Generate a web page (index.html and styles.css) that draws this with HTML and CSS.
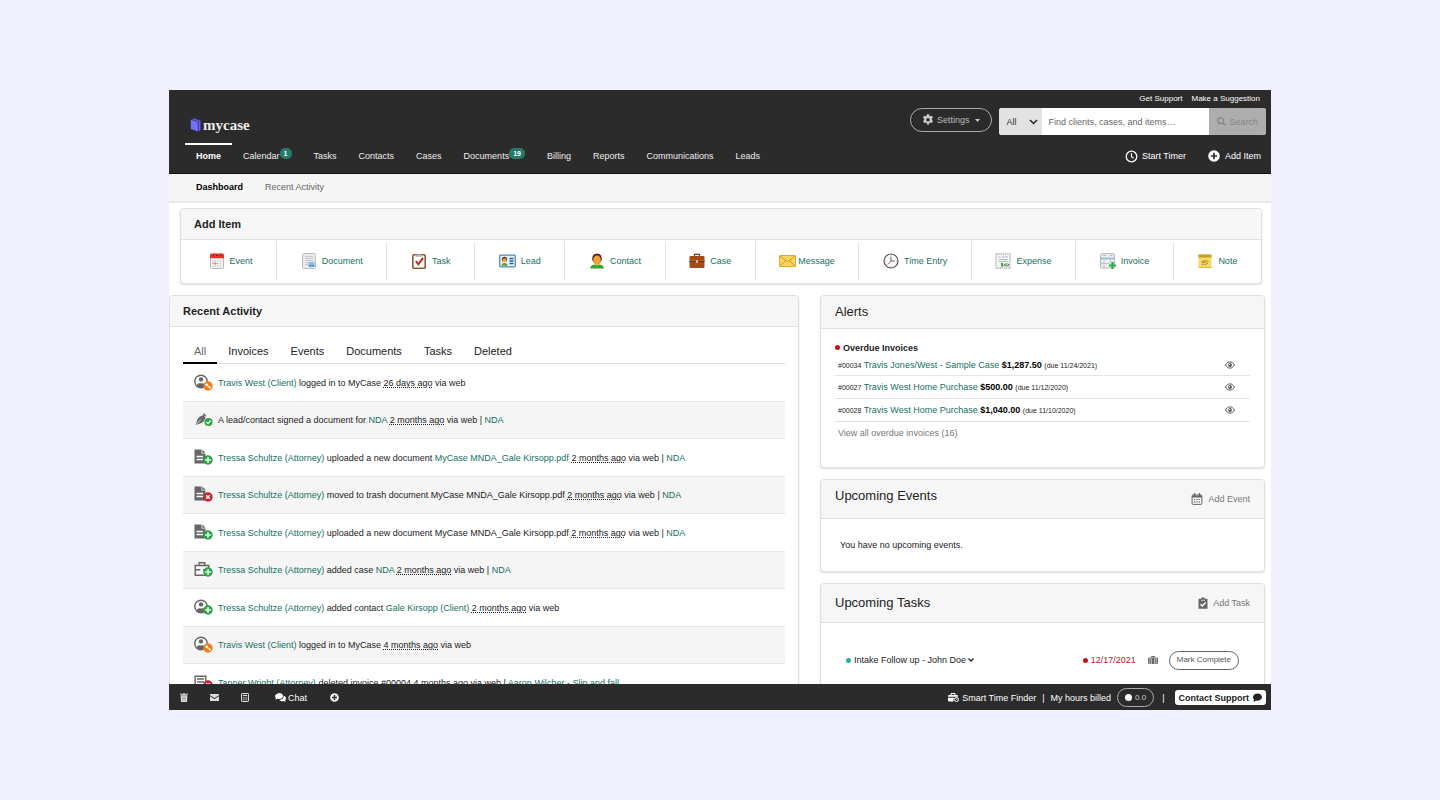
FILE: index.html
```html
<!DOCTYPE html>
<html lang="en">
<head>
<meta charset="utf-8">
<title>MyCase – Dashboard</title>
<link rel="stylesheet" href="styles.css">
</head>
<body>
<svg class="sprite" aria-hidden="true">
  <symbol id="person" viewBox="0 0 20 18">
    <circle cx="7" cy="7.5" r="6.2" fill="#fff" stroke="#666" stroke-width="1.4"/>
    <circle cx="7" cy="5.4" r="2.2" fill="#666"/>
    <path d="M2.6 11.8C3.4 9.2 5 8.8 7 9.6c2-.8 3.600-.4 4.400 2.200A6 6 0 0 1 2.600 11.800z" fill="#666"/>
  </symbol>
  <symbol id="file" viewBox="0 0 20 18">
    <path d="M.5.500h7v4h4V14.500H.500z" fill="#666"/><path d="M8.300.500l3.200 3.200H8.300z" fill="#666"/>
    <path d="M2.500 7.500h6.500M2.500 10.500h6.500" stroke="#fff" stroke-width="1.300"/>
  </symbol>
  <symbol id="add" viewBox="0 0 10 10">
    <circle cx="5" cy="5" r="4.700" fill="#28a745"/><path d="M5 2.200v5.600M2.200 5h5.600" stroke="#fff" stroke-width="1.600"/>
  </symbol>
  <symbol id="key" viewBox="0 0 10 10">
    <circle cx="5" cy="5" r="4.700" fill="#f57f17"/><circle cx="3.700" cy="3.700" r="1.300" fill="#fff"/><path d="M4 4l3.600 3.600M6.600 6.600l.9-.9" stroke="#fff" stroke-width="1.200"/>
  </symbol>
  <symbol id="remove" viewBox="0 0 10 10">
    <circle cx="5" cy="5" r="4.700" fill="#c82333"/><path d="M3.200 3.200l3.600 3.600M6.800 3.200L3.200 6.800" stroke="#fff" stroke-width="1.500"/>
  </symbol>
  <symbol id="eye" viewBox="0 0 10 8">
    <path d="M.5 4C1.800 1.800 3.300.900 5 .900S8.200 1.800 9.500 4C8.200 6.200 6.700 7.100 5 7.100S1.800 6.200.500 4z" fill="none" stroke="#555" stroke-width="1"/>
    <circle cx="5" cy="4" r="1.900" fill="#555"/><circle cx="4.500" cy="3.400" r=".7" fill="#fff"/>
  </symbol>
</svg>

<div class="app">
  <header class="header">
    <div class="utility">
      <a href="#">Get Support</a>
      <a href="#">Make a Suggestion</a>
    </div>
    <div class="brand-row">
      <a class="logo" href="#">
        <svg width="12" height="14" viewBox="0 0 12 14" aria-hidden="true"><path d="M1 1.500L4.500.200 11 2.500V12L7.500 13.500z" fill="#3f3fa6"/><path d="M3 .900l6.500 2.400V13" stroke="#8585f5" stroke-width=".6" fill="none"/><path d="M.800 1.800l7 2.600v9.200L.800 10.900z" fill="#7272f6"/></svg>
        <span>mycase</span>
      </a>
      <div class="tools">
        <button class="settings" type="button">
          <svg width="12" height="12" viewBox="0 0 12 12" aria-hidden="true"><path fill="#c8c8c8" fill-rule="evenodd" d="M4.900.300h2.200l.3 1.500 1 .5 1.400-.6 1.200 1.800-1.100 1 .1 1.500 1 1.100-1.100 1.800-1.500-.500-1 .6-.3 1.600H4.900l-.3-1.600-1-.600-1.500.500L1 7.100l1.100-1.100V4.700L1 3.500l1.200-1.800 1.400.6 1-.5zM6 4.100a1.700 1.700 0 1 0 0 3.500 1.700 1.700 0 0 0 0-3.500z"/></svg>
          <span>Settings</span>
          <svg width="5" height="3" viewBox="0 0 5 3" aria-hidden="true"><path d="M0 0h5L2.500 3z" fill="#c8c8c8"/></svg>
        </button>
        <form class="search" role="search">
          <div class="scope">
            <select aria-label="Search in"><option>All</option></select>
            <svg class="scope-arrow" width="9" height="6" viewBox="0 0 9 6" aria-hidden="true"><path d="M1 1l3.500 3.500L8 1" fill="none" stroke="#222" stroke-width="1.500"/></svg>
          </div>
          <input type="text" aria-label="Find clients, cases, and items" placeholder="Find clients, cases, and items…">
          <button type="submit" disabled>
            <svg width="9" height="9" viewBox="0 0 9 9" aria-hidden="true"><circle cx="3.700" cy="3.700" r="2.900" fill="none" stroke="#858585" stroke-width="1.200"/><path d="M5.800 5.800l2.700 2.700" stroke="#858585" stroke-width="1.400"/></svg>
            Search
          </button>
        </form>
      </div>
    </div>
    <div class="nav-row">
      <nav class="nav">
        <a class="current" href="#">Home</a>
        <a href="#">Calendar<span class="badge">1</span></a>
        <a href="#">Tasks</a>
        <a href="#">Contacts</a>
        <a href="#">Cases</a>
        <a href="#">Documents<span class="badge">19</span></a>
        <a href="#">Billing</a>
        <a href="#">Reports</a>
        <a href="#">Communications</a>
        <a href="#">Leads</a>
      </nav>
      <div class="quick">
        <button type="button">
          <svg width="13" height="13" viewBox="0 0 13 13" aria-hidden="true"><circle cx="6.500" cy="6.500" r="5.300" fill="none" stroke="#fff" stroke-width="1.300"/><path d="M6.500 3.200v3.500l2 1.500" fill="none" stroke="#fff" stroke-width="1.200"/></svg>
          Start Timer
        </button>
        <button type="button">
          <svg class="add-round" width="12" height="12" viewBox="0 0 12 12" aria-hidden="true"><circle cx="6" cy="6" r="5.800" fill="#fff"/><path d="M6 2.800v6.400M2.800 6h6.400" stroke="#2b2b2b" stroke-width="1.700"/></svg>
          Add Item
        </button>
      </div>
    </div>
  </header>

  <nav class="subnav">
    <a class="current" href="#">Dashboard</a>
    <a href="#">Recent Activity</a>
  </nav>

  <main class="main">
    <section class="card add-card">
      <h2 class="card-title small-head">Add Item</h2>
      <div class="add-items">
        <a href="#"><svg width="16" height="16" viewBox="0 0 16 16" aria-hidden="true"><rect x="1.500" y="1" width="13" height="14.500" rx="1.200" fill="#f1f1f1" stroke="#bbb"/><path d="M1 5.200V2Q1 .500 2.500.500h11Q15 .500 15 2v3.200z" fill="#dc3a31"/><path d="M4 2.500h1M11 2.500h1M7 2.500h2" stroke="#8c1713"/><path d="M3 8h10M3 10.500h10M3 13h10" stroke="#c5c5c5" stroke-dasharray="1.500 1"/><path d="M6 8.700v3.600M4.200 10.500h3.600" stroke="#e98c88"/></svg>Event</a>
        <a href="#"><svg width="16" height="16" viewBox="0 0 16 16" aria-hidden="true"><rect x="1.500" y=".500" width="13" height="15" rx="1" fill="#e8eaec" stroke="#b9bec3"/><path d="M4 3.500h8M4 5.500h8M4 7.500h8M4 9.500h3M4 11.500h3" stroke="#c3c9ce"/><rect x="7.500" y="9" width="6" height="4.500" fill="#8cbcec"/><path d="M7.500 12.300h6v1.200h-6z" fill="#3d82c8"/></svg>Document</a>
        <a href="#"><svg width="16" height="16" viewBox="0 0 16 16" aria-hidden="true"><rect x="1.800" y="1.800" width="12.400" height="13.500" rx="1.200" fill="#fff" stroke="#94582c" stroke-width="1.600"/><path d="M4.500 3.800V1.700h2Q8-.9 9.500 1.700h2v2.100z" fill="#b5b5b5"/><path d="M4.800 8l2.500 3.300L12 4.800" fill="none" stroke="#c42720" stroke-width="2"/></svg>Task</a>
        <a href="#"><svg width="17" height="16" viewBox="0 0 17 16" aria-hidden="true"><rect x=".700" y="2.200" width="15.600" height="11.600" rx="1" fill="#e5f0fa" stroke="#5484b5" stroke-width="1.200"/><circle cx="5.500" cy="6.300" r="2.600" fill="#5e341f"/><circle cx="5.500" cy="7.200" r="2" fill="#f1a23c"/><path d="M2.500 12.800q0-2.800 3-2.800t3 2.800z" fill="#4f9f35"/><path d="M10.500 5.500h4M10.500 8h4M10.500 10.500h4" stroke="#315e8e" stroke-width="1.300"/></svg>Lead</a>
        <a href="#"><svg width="16" height="16" viewBox="0 0 16 16" aria-hidden="true"><path d="M3.300 7Q2.500.500 8 .500t4.700 6.500l-1 2H4.300z" fill="#55281c"/><ellipse cx="8" cy="7.300" rx="3.800" ry="4.900" fill="#f2a035"/><path d="M1 15.500q.500-3.600 4.300-4l2.700 1 2.700-1q3.800.400 4.300 4z" fill="#35a52c"/></svg>Contact</a>
        <a href="#"><svg width="16" height="16" viewBox="0 0 16 16" aria-hidden="true"><path d="M5.500 3V1.300h5V3" fill="none" stroke="#713b1d" stroke-width="1.200"/><rect x=".500" y="3" width="15" height="12" rx="1" fill="#a64b16"/><path d="M.500 8.500h15" stroke="#70300d"/><path d="M.500 7.500h15" stroke="#d07638" stroke-width=".6"/><rect x="7" y="7" width="2" height="3" fill="#bbb"/></svg>Case</a>
        <a class="tight" href="#"><svg width="17" height="16" viewBox="0 0 17 16" aria-hidden="true"><rect x=".500" y="2.500" width="16" height="11" rx=".6" fill="#f9d457" stroke="#d8ac31"/><path d="M1 3l7.500 6L16 3M1 13.300l5.500-5.700M16 13.300l-5.500-5.700" fill="none" stroke="#bd942c" stroke-width=".9"/></svg>Message</a>
        <a href="#"><svg width="16" height="16" viewBox="0 0 16 16" aria-hidden="true"><circle cx="8" cy="8" r="7" fill="#fafafa" stroke="#555" stroke-width="1.200"/><path d="M8 3.500V8h3.500" fill="none" stroke="#666"/><path d="M8 8l-3.500 3.500" stroke="#d9556c"/><path d="M8 1.800v1M8 13.200v1M1.800 8h1M13.200 8h1" stroke="#888" stroke-width=".7"/></svg>Time Entry</a>
        <a href="#"><svg width="16" height="16" viewBox="0 0 16 16" aria-hidden="true"><rect x="1" y=".800" width="14" height="14.400" fill="#f4f5f5" stroke="#aaa" stroke-width="1.200" stroke-dasharray="1.500 .7"/><path d="M3.500 4h2M7 4h6M3.500 6.500h9M3.500 8.500h9" stroke="#b7bec3"/><path d="M8 10.500H6.300v1.200H8V13H6M7 9.800v4M9.500 11h4v1.800h-4z" fill="none" stroke="#3f8b3b" stroke-width=".9"/></svg>Expense</a>
        <a href="#"><svg width="16" height="16" viewBox="0 0 16 16" aria-hidden="true"><rect x=".600" y=".600" width="13.800" height="14.400" rx="1" fill="#edf0f2" stroke="#aeb4b8"/><path d="M2.500 2.500h4M10 2.500h2.500" stroke="#b7bec3"/><path d="M1 5.500h13" stroke="#9dbdd6" stroke-width="2"/><path d="M4 7v7.500M10.500 7v3M1 10.500h9" stroke="#c1c7cb"/><path d="M12.500 9v7M9 12.500h7" stroke="#2fac3e" stroke-width="2.200"/></svg>Invoice</a>
        <a href="#"><svg width="16" height="16" viewBox="0 0 16 16" aria-hidden="true"><path d="M1.500 1.500h13v13.500h-13z" fill="#f8da62"/><path d="M1.500 1.500h13v3h-13z" fill="#c2a02c"/><path d="M4.500 8.500l5-1M5 9.800l6.500-1.500M4.500 12l2-1 1 .5 3.500-1" fill="none" stroke="#a5872b" stroke-width=".9"/><path d="M1.500 14.500h13" stroke="#dfba40"/></svg>Note</a>
      </div>
    </section>

    <div class="columns">
      <section class="card activity-card">
        <h2 class="card-title small-head">Recent Activity</h2>
        <div class="activity">
          <div class="tabs" role="tablist">
            <button type="button" role="tab" aria-selected="true">All</button>
            <button type="button" role="tab" aria-selected="false">Invoices</button>
            <button type="button" role="tab" aria-selected="false">Events</button>
            <button type="button" role="tab" aria-selected="false">Documents</button>
            <button type="button" role="tab" aria-selected="false">Tasks</button>
            <button type="button" role="tab" aria-selected="false">Deleted</button>
          </div>
          <ul class="feed">
            <li><svg width="20" height="18" aria-hidden="true"><use href="#person" width="20" height="18"/><use href="#key" x="9" y="7" width="10" height="10"/></svg><p><a href="#">Travis West (Client)</a> logged in to MyCase <abbr title="26 days ago">26 days ago</abbr> via web</p></li>
            <li><svg width="20" height="18" viewBox="0 0 20 18" aria-hidden="true"><path d="M1.500 14L3.500 8Q5.500 5 9.500 4l2 2.500Q10.500 10.500 7.500 12z" fill="#666"/><path d="M2 13.500L7 8.500" stroke="#fff" stroke-width=".8"/><path d="M8.800 3l1.500-.7 2 2.500-1 1z" fill="#666"/><circle cx="14.500" cy="11" r="4" fill="#28a745"/><path d="M12.500 11l1.500 1.500 2.700-2.900" fill="none" stroke="#fff" stroke-width="1.300"/></svg><p>A lead/contact signed a document for <a href="#">NDA</a> <abbr title="2 months ago">2 months ago</abbr> via web | <a href="#">NDA</a></p></li>
            <li><svg width="20" height="18" aria-hidden="true"><use href="#file" width="20" height="18"/><use href="#add" x="9" y="6" width="10" height="10"/></svg><p><a href="#">Tressa Schultze (Attorney)</a> uploaded a new document <a href="#">MyCase MNDA_Gale Kirsopp.pdf</a> <abbr title="2 months ago">2 months ago</abbr> via web | <a href="#">NDA</a></p></li>
            <li><svg width="20" height="18" aria-hidden="true"><use href="#file" width="20" height="18"/><use href="#remove" x="9" y="6" width="10" height="10"/></svg><p><a href="#">Tressa Schultze (Attorney)</a> moved to trash document MyCase MNDA_Gale Kirsopp.pdf <abbr title="2 months ago">2 months ago</abbr> via web | <a href="#">NDA</a></p></li>
            <li><svg width="20" height="18" aria-hidden="true"><use href="#file" width="20" height="18"/><use href="#add" x="9" y="6" width="10" height="10"/></svg><p><a href="#">Tressa Schultze (Attorney)</a> uploaded a new document MyCase MNDA_Gale Kirsopp.pdf <abbr title="2 months ago">2 months ago</abbr> via web | <a href="#">NDA</a></p></li>
            <li><svg width="20" height="18" viewBox="0 0 20 18" aria-hidden="true"><path d="M1.200 4.500h13.600v9.800H1.200zM5.200 4.500V1.700h5.600v2.800M1.200 8.800h5M9 8.800h6" fill="none" stroke="#666" stroke-width="1.400"/><use href="#add" x="9" y="6" width="10" height="10"/></svg><p><a href="#">Tressa Schultze (Attorney)</a> added case <a href="#">NDA</a> <abbr title="2 months ago">2 months ago</abbr> via web | <a href="#">NDA</a></p></li>
            <li><svg width="20" height="18" aria-hidden="true"><use href="#person" width="20" height="18"/><use href="#add" x="9" y="6" width="10" height="10"/></svg><p><a href="#">Tressa Schultze (Attorney)</a> added contact <a href="#">Gale Kirsopp (Client)</a> <abbr title="2 months ago">2 months ago</abbr> via web</p></li>
            <li><svg width="20" height="18" aria-hidden="true"><use href="#person" width="20" height="18"/><use href="#key" x="9" y="7" width="10" height="10"/></svg><p><a href="#">Travis West (Client)</a> logged in to MyCase <abbr title="4 months ago">4 months ago</abbr> via web</p></li>
            <li><svg width="20" height="18" viewBox="0 0 20 18" aria-hidden="true"><path d="M1.200 2.200h10.600v12H1.200zM3 5h7M3 8h7" fill="none" stroke="#666" stroke-width="1.400"/><use href="#remove" x="9" y="6" width="10" height="10"/></svg><p><a href="#">Tanner Wright (Attorney)</a> deleted invoice #00004 <abbr title="4 months ago">4 months ago</abbr> via web | <a href="#">Aaron Wilcher - Slip and fall</a></p></li>
          </ul>
        </div>
      </section>

      <div class="side">
        <section class="card">
          <h2 class="card-title alerts-head">Alerts</h2>
          <div class="alerts">
            <h3><span class="dot red"></span>Overdue Invoices</h3>
            <ul>
              <li><p><small>#00034</small> <a href="#">Travis Jones/West - Sample Case</a> <b>$1,287.50</b> <small>(due 11/24/2021)</small></p><button type="button" aria-label="View invoice 00034"><svg width="10" height="8" aria-hidden="true"><use href="#eye"/></svg></button></li>
              <li><p><small>#00027</small> <a href="#">Travis West Home Purchase</a> <b>$500.00</b> <small>(due 11/12/2020)</small></p><button type="button" aria-label="View invoice 00027"><svg width="10" height="8" aria-hidden="true"><use href="#eye"/></svg></button></li>
              <li><p><small>#00028</small> <a href="#">Travis West Home Purchase</a> <b>$1,040.00</b> <small>(due 11/10/2020)</small></p><button type="button" aria-label="View invoice 00028"><svg width="10" height="8" aria-hidden="true"><use href="#eye"/></svg></button></li>
            </ul>
            <a class="view-all" href="#">View all overdue invoices (16)</a>
          </div>
        </section>

        <section class="card">
          <div class="card-head events-head">
            <h2>Upcoming Events</h2>
            <button type="button"><svg width="12" height="12" viewBox="0 0 12 12" aria-hidden="true"><rect x="1.100" y="2" width="9.800" height="9.400" rx="1" fill="none" stroke="#666"/><path d="M1 3.500h10" stroke="#666" stroke-width="1.800"/><path d="M3.500 0v3M8.500 0v3" stroke="#666" stroke-width="1.300"/><path d="M3 6.500h6M3 8.800h6" stroke="#666" stroke-width="1.200" stroke-dasharray="1.300 1"/></svg>Add Event</button>
          </div>
          <p class="empty">You have no upcoming events.</p>
        </section>

        <section class="card tasks-card">
          <div class="card-head">
            <h2>Upcoming Tasks</h2>
            <button type="button"><svg width="10" height="12" viewBox="0 0 10 12" aria-hidden="true"><path d="M.5 1.800H3Q3.200.200 5 .200t2 1.600h2.500V11.800H.500z" fill="#666"/><path d="M3 3.300h4" stroke="#f5f5f5" stroke-width=".7"/><path d="M2.500 7.200l1.800 1.800 3.300-3.500" fill="none" stroke="#fff" stroke-width="1.300"/></svg>Add Task</button>
          </div>
          <div class="task">
            <button class="task-name" type="button"><span class="dot teal"></span>Intake Follow up - John Doe <svg width="6" height="4" viewBox="0 0 6 4" aria-hidden="true"><path d="M.500.500L3 3 5.500.500" fill="none" stroke="#222" stroke-width="1.300"/></svg></button>
            <span class="due"><span class="dot red"></span>12/17/2021</span>
            <svg width="10" height="8" viewBox="0 0 10 8" aria-hidden="true"><path d="M1.600 1.500V8H1Q0 8 0 7V2.500Q0 1.500 1 1.500zM8.400 1.500V8H9Q10 8 10 7V2.500Q10 1.500 9 1.500zM2.200 1.500h1.300V8H2.200zM4 1.500h2V8H4zM6.500 1.500h1.300V8H6.500z" fill="#666"/><path d="M3.300 1.800V.500h3.400v1.300" fill="none" stroke="#666" stroke-width="1"/></svg>
            <button class="complete" type="button">Mark Complete</button>
          </div>
        </section>
      </div>
    </div>
  </main>

  <footer class="footer">
    <div class="foot-left">
      <button type="button" aria-label="Trash"><svg width="8" height="9" viewBox="0 0 8 9" aria-hidden="true"><path d="M0 .800h2.500L3 .200h2l.500.600H8v1H0zM.600 2.300h6.800L7 9H1z" fill="#ddd"/><path d="M2.700 3.500v4.300M4 3.500v4.300M5.300 3.500v4.300" stroke="#777" stroke-width=".5"/></svg></button>
      <button type="button" aria-label="Mail"><svg width="9" height="7" viewBox="0 0 9 7" aria-hidden="true"><path d="M0 0h9v1.200L4.500 4 0 1.200zM0 2.200L4.500 5 9 2.200V7H0z" fill="#ddd"/></svg></button>
      <button type="button" aria-label="Calculator"><svg width="8" height="9" viewBox="0 0 8 9" aria-hidden="true"><rect x=".500" y=".500" width="7" height="8" rx=".6" fill="none" stroke="#ddd"/><path d="M1.800 2.500h4.400" stroke="#ddd" stroke-width="1.200"/><path d="M1.800 4.900h4.400M1.800 6.800h4.400" stroke="#ddd" stroke-width="1.100" stroke-dasharray="1 .7"/></svg></button>
      <button class="chat" type="button"><svg width="11" height="9" viewBox="0 0 11 9" aria-hidden="true"><path d="M4 0C6.200 0 8 1.300 8 3S6.200 6 4 6q-.8 0-1.400-.2Q1.500 6.600.200 6.600L1 5Q0 4.200 0 3 0 1.300 4 0z" fill="#fff"/><path d="M8.800 2.600Q11 3.500 11 5.500q0 1-.9 1.900l.7 1.400q-1.200 0-2.400-.7Q5.700 8.500 4.200 6.900 8.600 6.700 8.800 2.600z" fill="#fff"/></svg>Chat</button>
      <button type="button" aria-label="Add"><svg width="9" height="9" viewBox="0 0 9 9" aria-hidden="true"><circle cx="4.500" cy="4.500" r="4.300" fill="#fff"/><path d="M4.500 2v5M2 4.500h5" stroke="#2b2b2b" stroke-width="1.400"/></svg></button>
    </div>
    <div class="foot-right">
      <a href="#"><svg width="11" height="9" viewBox="0 0 11 9" aria-hidden="true"><path d="M3 2V.500h4V2" fill="none" stroke="#fff"/><path d="M1 2h8q1 0 1 1v.7H0V3q0-1 1-1zM0 4.700h6.300Q5.200 5.800 5.400 8.500H1q-1 0-1-1z" fill="#fff"/><circle cx="8.500" cy="6.500" r="2" fill="none" stroke="#fff"/><path d="M8.500 5.500v1h.8" fill="none" stroke="#fff" stroke-width=".6"/></svg>Smart Time Finder</a>
      <span>|</span>
      <span>My hours billed</span>
      <button class="hours" type="button"><span class="knob"></span>0.0</button>
      <span class="bar">|</span>
      <button class="contact" type="button">Contact Support<svg width="9" height="9" viewBox="0 0 9 9" aria-hidden="true"><path d="M4.500.500C7 .500 9 2 9 4.100s-2 3.600-4.500 3.600q-.8 0-1.600-.3Q1.700 8.600.200 8.600L1.100 6.700Q0 5.700 0 4.100C0 2 2 .500 4.500.500z" fill="#222"/></svg></button>
    </div>
  </footer>
</div>
</body>
</html>
```

FILE: styles.css
```css
* {
  box-sizing: border-box;
}

body {
  display: flex;
  height: 100vh;
  margin: 0;
  padding: 90px 169px;
  background: #f0f0fe;
  color: #222;
  font: 9px/14px "Liberation Sans", Arial, sans-serif;
}

h2,
h3,
p,
ul {
  margin: 0;
  padding: 0;
}

ul {
  list-style: none;
}

a {
  color: #14705f;
  text-decoration: none;
}

button,
input,
select {
  margin: 0;
  padding: 0;
  border: 0;
  background: none;
  color: inherit;
  font: inherit;
}

svg {
  display: block;
  flex: none;
}

.sprite {
  position: absolute;
  width: 0;
  height: 0;
}

.app {
  display: flex;
  flex: 1;
  flex-direction: column;
  min-width: 0;
  overflow: hidden;
  background: #fff;
}

/* Header */

.header {
  flex: none;
  border-bottom: 1px solid #111;
  background: #2b2b2b;
  color: #eee;
}

.header a {
  color: inherit;
}

.utility {
  display: flex;
  justify-content: flex-end;
  gap: 9px;
  padding: 2px 11px 2px 0;
  color: #fff;
  font-size: 8px;
}

.brand-row {
  display: flex;
  justify-content: space-between;
  height: 35px;
  padding: 0 5px 0 21px;
}

.logo {
  display: flex;
  align-items: center;
  gap: 1px;
  height: 34px;
  color: #fff;
  font: bold 15px/20px "Liberation Serif", serif;
}

.tools {
  display: flex;
  align-items: flex-start;
  gap: 7px;
}

.settings {
  display: flex;
  align-items: center;
  gap: 3px;
  height: 24px;
  padding: 0 11px;
  border: 1px solid #aaa;
  border-radius: 12px;
  color: #bbb;
}

.settings span {
  margin-right: 3px;
}

.search {
  display: flex;
  height: 27px;
  overflow: hidden;
  border-radius: 3px;
  background: #fff;
}

.scope {
  position: relative;
}

.scope select {
  width: 43px;
  height: 100%;
  padding-left: 7px;
  appearance: none;
  background: #e2e2e2;
  color: #333;
}

.scope-arrow {
  position: absolute;
  top: 11px;
  right: 4px;
  pointer-events: none;
}

.search input {
  width: 167px;
  padding: 0 6px;
  color: #333;
}

.search input::placeholder {
  color: #666;
  opacity: 1;
}

.search button {
  display: flex;
  align-items: center;
  gap: 3px;
  padding: 0 8px;
  background: #adadad;
  color: #858585;
}

.nav-row {
  display: flex;
  justify-content: space-between;
  height: 30px;
  padding: 0 10px 0 16px;
}

.nav {
  display: flex;
}

.nav a {
  display: flex;
  height: 24px;
  padding: 0 11px;
  border-top: 2px solid transparent;
  line-height: 22px;
}

.nav .current {
  border-color: #fff;
  color: #fff;
  font-weight: bold;
}

.badge {
  align-self: flex-start;
  min-width: 12px;
  margin-top: 3px;
  padding: 0 4px;
  border-radius: 5px;
  background: #27796c;
  color: #fff;
  font-size: 7px;
  font-weight: bold;
  line-height: 11px;
}

.quick {
  display: flex;
  align-items: flex-start;
  gap: 22px;
  color: #fff;
}

.quick button {
  display: flex;
  align-items: center;
  gap: 4px;
  height: 26px;
}

.add-round {
  margin-right: 1px;
}

.subnav {
  display: flex;
  flex: none;
  gap: 22px;
  padding: 6px 27px 7px;
  border-bottom: 2px solid #e9e9e9;
  background: #f5f5f5;
}

.subnav a {
  color: #666;
}

.subnav .current {
  color: #000;
  font-weight: bold;
}

/* Cards */

.main {
  flex: 1;
  min-height: 0;
  padding-top: 5px;
  overflow: hidden;
}

.card {
  overflow: hidden;
  border: 1px solid #e0e0e0;
  border-radius: 4px;
  background: #fff;
  box-shadow: 0 1px 2px #ddd;
}

.card-title {
  padding: 0 14px;
  border-bottom: 1px solid #e0e0e0;
  background: #f6f6f6;
  font-size: 13px;
  font-weight: normal;
  line-height: 32px;
}

.small-head {
  padding: 0 13px;
  font-size: 11px;
  font-weight: bold;
  line-height: 30px;
}

.add-card {
  margin: 0 9px 11px 11px;
}

.add-items {
  display: flex;
  padding: 2px 0 3px;
}

.add-items a {
  display: flex;
  flex: 1 0 auto;
  align-items: center;
  justify-content: center;
  gap: 5px;
  height: 38px;
  border-right: 1px solid #e4e4e4;
  padding: 0 22px;
}

.add-items a:first-child {
  padding-left: 26px;
}

.add-items a:last-child {
  border-right: 0;
}

.add-items .tight {
  gap: 2px;
}

.columns {
  display: grid;
  grid-template-columns: minmax(0, 630fr) minmax(0, 445fr);
  align-items: start;
  gap: 21px;
  padding-right: 6px;
}

/* Activity */

.activity {
  padding: 13px 13px 0;
}

.tabs {
  display: flex;
  border-bottom: 1px solid #ddd;
}

.tabs button {
  height: 24px;
  margin-bottom: -1px;
  padding: 0 11px;
  border-bottom: 2px solid transparent;
  font-size: 11px;
}

.tabs [aria-selected="true"] {
  border-color: #000;
  color: #666;
}

.feed li {
  display: flex;
  align-items: center;
  gap: 4px;
  height: 38px;
  padding-left: 11px;
  border-bottom: 1px solid #e6e6e6;
}

.feed li:nth-child(even) {
  height: 37px;
  background: #f5f5f5;
}

abbr {
  text-decoration: underline dotted;
  text-underline-offset: 1px;
}

/* Side column */

.side {
  display: grid;
  gap: 11px;
}

.dot {
  display: inline-block;
  width: 5px;
  height: 5px;
  margin-right: 3px;
  border-radius: 50%;
}

.red {
  background: #c4151c;
}

.teal {
  background: #20b39b;
}

.alerts {
  padding: 12px 14px 23px;
}

.alerts h3 {
  font-size: 9px;
  line-height: 14px;
}

.alerts h3 .dot {
  vertical-align: 1px;
}

.alerts li {
  display: flex;
  align-items: center;
  justify-content: space-between;
  height: 23px;
  padding: 0 15px 0 3px;
  border-bottom: 1px solid #e4e4e4;
}

.alerts li:first-child {
  height: 21px;
}

.alerts small {
  font-size: 7px;
}

.alerts b {
  color: #000;
}

.view-all {
  display: block;
  padding: 4px 3px;
  color: #777;
}

.card-head {
  display: flex;
  align-items: center;
  justify-content: space-between;
  height: 39px;
  padding: 0 14px;
  border-bottom: 1px solid #e0e0e0;
  background: #f6f6f6;
}

.card-head h2 {
  font-size: 13px;
  font-weight: normal;
  line-height: 20px;
}

.events-head h2 {
  padding-bottom: 6px;
}

.card-head button {
  display: flex;
  align-items: center;
  gap: 5px;
  color: #777;
}

.empty {
  padding: 19px;
}

.task {
  display: flex;
  align-items: center;
  min-height: 74px;
  padding: 0 25px;
}

.task-name {
  display: flex;
  flex: 1;
  align-items: center;
  gap: 2px;
}

.task-name .dot {
  margin-right: 1px;
}

.due {
  display: flex;
  align-items: center;
  margin-right: 12px;
  color: #c4151c;
}

.complete {
  height: 19px;
  margin-left: 11px;
  padding: 0 7px;
  border: 1px solid #666;
  border-radius: 10px;
  color: #555;
  font-size: 8px;
}

/* Footer */

.footer {
  display: flex;
  flex: none;
  align-items: center;
  justify-content: space-between;
  height: 26px;
  padding: 1px 5px 0 11px;
  background: #2b2b2b;
  color: #fff;
}

.foot-left,
.foot-right,
.footer a,
.footer button {
  display: flex;
  align-items: center;
}

.footer a {
  gap: 3px;
  color: inherit;
}

.foot-left {
  gap: 22px;
}

.foot-left .chat {
  gap: 2px;
  margin: 0 1px 0 4px;
}

.foot-right {
  gap: 6px;
}

.footer .hours {
  gap: 3px;
  height: 19px;
  padding: 0 7px;
  border: 1px solid #aaa;
  border-radius: 10px;
  color: #ccc;
  font-size: 8px;
}

.knob {
  width: 7px;
  height: 7px;
  border-radius: 50%;
  background: #fff;
}

.bar {
  margin: 0 4px 0 2px;
}

.footer .contact {
  gap: 4px;
  height: 15px;
  padding: 0 4px;
  border-radius: 3px;
  background: #fff;
  color: #222;
  font-weight: bold;
}
```
